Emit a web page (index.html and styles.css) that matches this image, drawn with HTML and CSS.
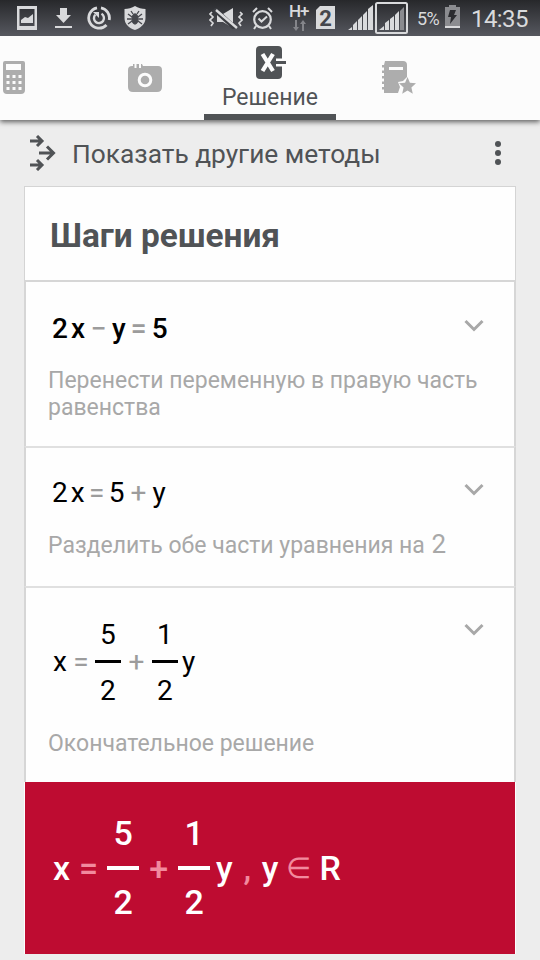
FILE: index.html
```html
<!DOCTYPE html>
<html lang="ru">
  <head>
    <meta charset="utf-8" />
    <title>Решение</title>
    <link rel="stylesheet" href="styles.css">
  </head>
  <body>
    <div class="status">
      <svg class="s_picture" width="20" height="24" viewBox="0 0 20 24">
        <path d="M0 0h20v24H0zM2.500 3v17h15V3z" fill-rule="evenodd" />
        <path d="M4 17v-3l4-3 3 1 5-4v9z" />
      </svg>
      <svg class="s_download" width="17" height="20" viewBox="0 0 17 20">
        <path d="M5 0h7v7h4l-7.500 8L1 7h4zM0 18h17v2H0z" />
      </svg>
      <svg class="s_sync" width="24" height="24" viewBox="0 0 24 24">
        <path class="line" d="M10 1.800A10.300 10.300 0 1 0 19.500 19M22.200 14A10.300 10.300 0 0 0 14 1.800" stroke-width="2.800" />
        <path class="line" d="M14.500 7.800a5 5 0 1 1-6.200 0.900" stroke-width="2.400" />
        <path d="M6 6h6v6z" />
      </svg>
      <svg class="s_shield" width="22" height="24" viewBox="0 0 22 24">
        <path d="M11 0c3 2 7 3 10.500 3v9c0 6-5 10-10.500 12C5 22 .5 18 .5 12V3C4 3 8 2 11 0z" />
        <g fill="#45474c" stroke="#45474c" stroke-width="1.300">
          <ellipse cx="11" cy="13" rx="3" ry="5" />
          <path d="M8 11L4 8M7.500 13H3M8 15l-4 3M14 11l4-3M14.500 13H19M14 15l4 3M9 8L7 5M13 8l2-3" />
        </g>
      </svg>
      <svg class="s_mute" width="34" height="21" viewBox="0 0 34 21">
        <path d="M8 6h6l10-6v20l-10-6H8z" />
        <path d="M5 1l21 19" stroke="#3b3d42" stroke-width="5" />
        <path class="line" d="M7 2l21 18" stroke-width="2.400" />
        <path class="line" d="M3 4L1 6l3 3-3 3 3 3-2 3M31 4l2 2-3 3 3 3-3 3 2 3" stroke-width="1.700" />
      </svg>
      <svg class="s_alarm" width="21" height="23" viewBox="0 0 21 23">
        <circle class="line" cx="10.500" cy="12.500" r="8.300" stroke-width="2.200" />
        <path class="line" d="M6.500 11.500l3 3 5.500-5M1 5l4-4M20 5l-4-4M4 19l-2 3M17 19l2 3" stroke-width="2" />
      </svg>
      <div class="s_net">
        <span>H+</span>
        <svg width="13" height="11" viewBox="0 0 13 11">
          <path d="M2 0h2v7h2l-3 4-3-4h2zM9 11h2V4h2l-3-4-3 4h2z" />
        </svg>
      </div>
      <span class="s_sim">2</span>
      <svg class="s_signal" width="25" height="25" viewBox="0 0 25 25">
        <path d="M0 25l4-3v3zM5 25v-5l4-4v9zM10 25V15l4-4v14zM15 25V10l4-4v19zM20 25V4l5-4v25z" />
      </svg>
      <svg class="s_signal2" width="33" height="32" viewBox="0 0 33 32">
        <rect class="line" x="1" y="1" width="31" height="30" rx="1.500" stroke-width="2" />
        <path d="M4 28l5-4v4zM10 28v-7l4-3v10zM15 28V17l4-3v14zM20 28V13l4-4v19z" />
        <path d="M25 28V9l4-4v23z" fill="#8a8b8f" />
      </svg>
      <span class="s_percent">5%</span>
      <svg class="s_battery" width="15" height="23" viewBox="0 0 15 23">
        <path d="M0 2h4V0h7v2h4v19H0z" fill="#8b8c90" />
        <path d="M0 21h15v2H0z" />
        <path d="M5 5h6l-2 5h3L5 19l1-7H3z" fill="#2b2c30" />
      </svg>
      <span class="s_time">14:35</span>
    </div>

    <div class="tabs">
      <div class="tab calc">
        <svg width="22" height="34" viewBox="0 0 22 34">
          <path fill-rule="evenodd" d="M2 0h18q2 0 2 2v27q0 4-4 4H4q-4 0-4-4V2q0-2 2-2zM3 3v6h15V3zM3.500 14v3h3v-3zM9.500 14v3h3v-3zM15.500 14v3h3v-3zM3.500 20v3h3v-3zM9.500 20v3h3v-3zM15.500 20v3h3v-3zM3.500 26v3h3v-3zM9.500 26v3h3v-3zM15.500 26v3h3v-3z" />
        </svg>
      </div>
      <div class="tab camera">
        <svg width="34" height="28" viewBox="0 0 34 28">
          <path d="M4 2h1V0h1.500v4h2V0h2.500v4h2V0H14l1 2h15q4 0 4 4v17q0 5-5 5H5q-5 0-5-5V6q0-4 4-4z" />
          <circle cx="17" cy="16" r="5.800" fill="none" stroke="#fcfcfc" stroke-width="3" />
        </svg>
      </div>
      <div class="tab active">
        <svg width="31" height="33" viewBox="0 0 31 33">
          <path d="M4 0h18q4 0 4 4v8.500h-6v2.500h10v3H20v2.500h6V29q0 4-4 4H4q-4 0-4-4V4q0-4 4-4z" />
          <path d="M6.500 8l10.500 17M17 8L6.500 25" stroke="#fcfcfc" stroke-width="4.200" />
        </svg>
        <span>Решение</span>
      </div>
      <div class="tab notes">
        <svg width="34" height="34" viewBox="0 0 34 34">
          <path d="M3 0h18q4 0 4 4v12l-4 4-5 1 2 5-2 6H2v-3.500H0V26h2v-3H0v-2.500h2v-3H0V15h2v-3H0V9.500h2v-3H0V4h2z" />
          <rect x="7" y="6" width="14" height="3" fill="#fcfcfc" />
          <path d="M25.500 16l2.400 5.800 6.100.5-4.600 4.200 1.400 6.300-5.300-3.300-5.300 3.300 1.400-6.300-4.600-4.200 6.100-.5z" />
        </svg>
      </div>
    </div>

    <div class="methods">
      <svg width="27" height="36" viewBox="0 0 27 36">
        <path d="M1 6h12M8 1l5 5-5 5M10 18h14M18 11.500l6.500 6.500-6.500 6.500M1 30h12M8 25l5 5-5 5" />
      </svg>
      <span>Показать другие методы</span>
      <div class="dots"><i></i><i></i><i></i></div>
    </div>

    <div class="card">
      <h3>Шаги решения</h3>

      <div class="step step1">
        <div class="math">
          <b>2</b><b class="var">x</b><i>−</i><b>y</b><i class="eq">=</i><b>5</b>
        </div>
        <p>Перенести переменную в правую часть равенства</p>
        <svg class="arrow" width="20" height="13" viewBox="0 0 20 13"><path d="M1.500 2l8.500 8.500L18.500 2" /></svg>
      </div>

      <div class="step step2">
        <div class="math">
          <span>2</span><span class="var">x</span><i class="eq">=</i><span>5</span><i>+</i><span>y</span>
        </div>
        <p>Разделить обе части уравнения на <span>2</span></p>
        <svg class="arrow" width="20" height="13" viewBox="0 0 20 13"><path d="M1.500 2l8.500 8.500L18.500 2" /></svg>
      </div>

      <div class="step step3">
        <div class="math">
          <span>x</span><i class="eq">=</i>
          <div class="frac"><span>5</span><span>2</span></div>
          <i>+</i>
          <div class="frac"><span>1</span><span>2</span></div>
          <span class="after">y</span>
        </div>
        <p>Окончательное решение</p>
        <svg class="arrow" width="20" height="13" viewBox="0 0 20 13"><path d="M1.500 2l8.500 8.500L18.500 2" /></svg>
      </div>

      <div class="result">
        <div class="math">
          <b>x</b><i class="eq">=</i>
          <div class="frac"><b>5</b><b>2</b></div>
          <i>+</i>
          <div class="frac"><b>1</b><b>2</b></div>
          <b class="after">y</b><i class="comma">,</i><b>y</b><i class="in">∈</i><b>R</b>
        </div>
      </div>
    </div>
  </body>
</html>
```
FILE: styles.css
```css
* {
  margin: 0px;
  padding: 0px;
  box-sizing: border-box;
}
body {
  width: 540px;
  height: 960px;
  overflow: hidden;
  background-color: #ededed;
  font-family: Roboto, "Liberation Sans", sans-serif;
  color: #505356;
}
i {
  font-style: normal;
}
svg {
  display: block;
  flex: none;
}

/* status bar */
.status {
  height: 36px;
  background: linear-gradient(#27282b, #56585f);
  display: flex;
  align-items: flex-start;
  padding-left: 17px;
  color: #d9dadc;
  fill: #d9dadc;
}
.status .line {
  fill: none;
  stroke: #d9dadc;
}
.s_picture {
  margin-top: 6px;
}
.s_download {
  margin: 8px 0px 0px 18px;
}
.s_sync {
  margin: 6px 0px 0px 15px;
}
.s_shield {
  margin: 6px 0px 0px 13px;
}
.s_mute {
  margin: 8px 0px 0px 63px;
}
.s_alarm {
  margin: 7px 0px 0px 9px;
}
.s_net {
  width: 20px;
  margin: 4px 0px 0px 16px;
  font-size: 17px;
  font-weight: 500;
  line-height: 15px;
  letter-spacing: -1px;
}
.s_net svg {
  margin: 1px 0px 0px 4px;
  fill: #84858a;
}
.s_sim {
  width: 19px;
  height: 23px;
  margin: 6px 0px 0px 7px;
  background: #d9dadc;
  color: #45474c;
  clip-path: polygon(4px 0, 100% 0, 100% 100%, 0 100%, 0 4px);
  font-size: 22px;
  font-weight: 700;
  line-height: 25px;
  text-align: center;
}
.s_signal {
  margin: 5px 0px 0px 13px;
}
.s_signal2 {
  margin: 2px 0px 0px 2px;
}
.s_percent {
  width: 25px;
  margin: 9px 0px 0px 9px;
  font-size: 18px;
  line-height: 20px;
  letter-spacing: -0.600px;
}
.s_battery {
  margin: 5px 0px 0px 3px;
}
.s_time {
  margin: 5px 0px 0px 11px;
  font-size: 24px;
  line-height: 28px;
  letter-spacing: -0.600px;
}

/* tabs */
.tabs {
  height: 84px;
  background: #fcfcfc;
  display: flex;
  box-shadow: 0px 2px 5px rgba(0, 0, 0, 0.6);
  clip-path: inset(0px 0px -10px 0px);
  fill: #adadad;
}
.tab {
  width: 132px;
  display: flex;
  flex-direction: column;
  align-items: center;
}
.calc {
  width: 72px;
  align-items: flex-start;
  padding: 25px 0px 0px 3px;
}
.camera {
  padding: 28px 0px 0px 14px;
}
.active {
  fill: #505356;
  padding-top: 10px;
  border-bottom: 6px solid #505356;
}
.active svg {
  margin-left: 2px;
}
.active span {
  font-size: 23px;
  line-height: 28px;
  margin-top: 5px;
}
.notes {
  padding: 25px 6px 0px 0px;
}

.methods {
  height: 66px;
  display: flex;
  align-items: center;
  padding-left: 29px;
  font-size: 26.300px;
}
.methods svg {
  fill: none;
  stroke: #505356;
  stroke-width: 3px;
}
.methods span {
  margin: 2px 0px 0px 16px;
  white-space: nowrap;
}
.dots {
  margin: 0px 39px 0px auto;
  display: grid;
  gap: 3px;
}
.dots i {
  width: 6px;
  height: 6px;
  border-radius: 50%;
  background: #505356;
}

/* steps */
.card {
  width: 492px;
  margin-left: 24px;
  background: #fefefe;
}
h3 {
  height: 94px;
  padding-left: 25px;
  border: 1px solid #d4d4d4;
  border-bottom: none;
  font-size: 33.400px;
  line-height: 97px;
}
.step {
  position: relative;
  padding: 0px 24px 0px 22px;
  border: 2px solid #d6d6d6;
  border-bottom: none;
}
.step2,
.step3 {
  border-top-color: #e0e0e0;
}
.step1 {
  height: 166px;
}
.step2 {
  height: 140px;
}
.step3 {
  height: 196px;
}
.step p {
  font-size: 23px;
  line-height: 27px;
  color: #a8a8a8;
}
.step p span {
  margin-left: 1px;
  font-size: 26px;
}
.arrow {
  position: absolute;
  top: 35px;
  right: 30px;
  fill: none;
  stroke: #a8a8a8;
  stroke-width: 3px;
}
.step1 .arrow {
  top: 37px;
}

.math {
  display: flex;
  align-items: center;
  padding-left: 4px;
  font-size: 28px;
  line-height: 36px;
  color: #000;
}
.math b {
  font-weight: 500;
}
.math i {
  width: 28px;
  text-align: center;
  color: #9c9c9c;
}
.var {
  margin-left: 3px;
}
.step1 .math {
  padding-top: 29px;
  margin-bottom: 20px;
}
.step1 i {
  width: 27px;
  font-weight: 500;
}
.step1 .eq {
  width: 26px;
}
.step2 .math {
  padding-top: 27px;
  margin-bottom: 20px;
}
.step2 .eq {
  width: 24px;
}
.step3 .math {
  padding: 29px 0px 0px 5px;
  margin-bottom: 23px;
}
.step3 i {
  width: 31px;
}
.step3 .eq {
  width: 28px;
}
.frac {
  width: 26px;
  display: grid;
  text-align: center;
}
.step3 .frac {
  margin-bottom: -2px;
}
.frac > :first-child {
  padding-bottom: 7px;
  border-bottom: 3px solid;
}
.frac > :last-child {
  padding-top: 10px;
}
.after {
  margin-left: 4px;
}

.result {
  width: 490px;
  height: 172px;
  margin-left: 1px;
  padding: 33px 0px 0px 28px;
  background: #be0c31;
}
.result .math {
  padding-left: 0px;
  font-size: 34px;
  color: #fff;
}
.result i {
  width: 39px;
  color: #f28a9e;
  font-weight: 500;
}
.result .eq {
  width: 37px;
}
.result .frac {
  width: 32px;
}
.result .frac > :first-child {
  padding-bottom: 15px;
  border-bottom-width: 4px;
}
.result .frac > :last-child {
  padding-top: 14px;
}
.result .after {
  margin-left: 6px;
}
.result .comma {
  width: 29px;
}
.result .in {
  width: 41px;
  font-size: 29px;
}
```
